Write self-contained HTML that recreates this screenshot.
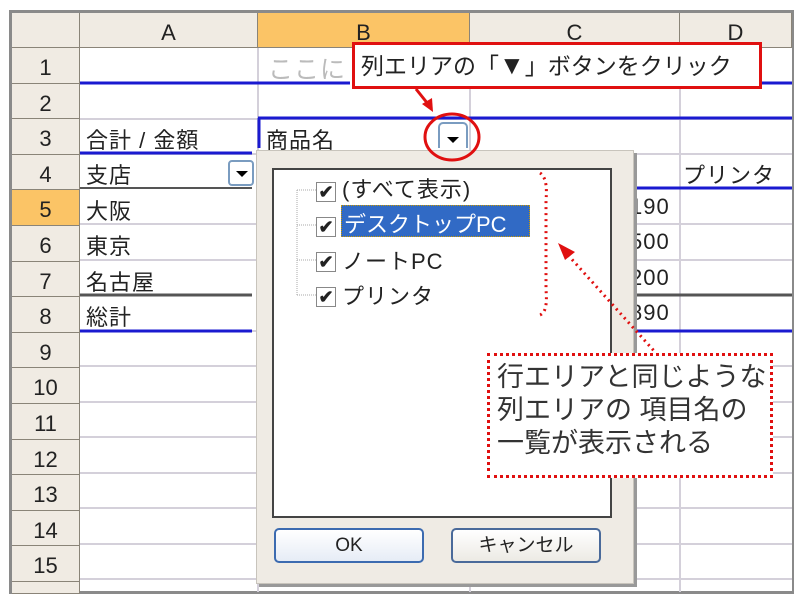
<!DOCTYPE html>
<html><head><meta charset="utf-8"><style>
*{margin:0;padding:0;box-sizing:border-box}
body{width:800px;height:600px;background:#fff;position:relative;overflow:hidden;font-family:"Liberation Sans","Noto Sans CJK JP",sans-serif;color:#222}
.a{position:absolute}
.hd{background:#f0ebe3;border-right:1px solid #8a8478;border-bottom:1px solid #8a8478;text-align:center;font-size:22px;color:#222}
.t{position:absolute;font-size:22px;white-space:nowrap;color:#222;letter-spacing:1px}
</style></head><body>
<div class="a" style="left:9px;top:10px;width:785px;height:584px;border:3px solid #8a8a8a;border-right-width:2px;background:#fff"></div>
<svg class="a" style="left:0;top:0" width="800" height="600">
 <g stroke="#d4d0da" stroke-width="2">
  <line x1="80" y1="119" x2="792" y2="119"/><line x1="80" y1="154" x2="792" y2="154"/>
  <line x1="80" y1="224" x2="792" y2="224"/><line x1="80" y1="260" x2="792" y2="260"/>
  <line x1="80" y1="366" x2="792" y2="366"/><line x1="80" y1="402" x2="792" y2="402"/>
  <line x1="80" y1="437" x2="792" y2="437"/><line x1="80" y1="473" x2="792" y2="473"/>
  <line x1="80" y1="508" x2="792" y2="508"/><line x1="80" y1="544" x2="792" y2="544"/>
  <line x1="80" y1="579" x2="792" y2="579"/><line x1="80" y1="331" x2="792" y2="331"/>
  <line x1="258" y1="48" x2="258" y2="592"/><line x1="470" y1="48" x2="470" y2="592"/>
  <line x1="680" y1="48" x2="680" y2="592"/>
 </g>
 <line x1="80" y1="83" x2="350" y2="83" stroke="#1a1ad0" stroke-width="3"/>
 <line x1="762" y1="83" x2="792" y2="83" stroke="#1a1ad0" stroke-width="3"/>
 <line x1="258" y1="118" x2="792" y2="118" stroke="#1a1ad0" stroke-width="3"/>
 <line x1="259" y1="118" x2="259" y2="148" stroke="#1a1ad0" stroke-width="3"/>
 <line x1="80" y1="153" x2="252" y2="153" stroke="#1a1ad0" stroke-width="3"/>
 <line x1="634" y1="188" x2="792" y2="188" stroke="#1a1ad0" stroke-width="3"/>
 <line x1="80" y1="295" x2="252" y2="295" stroke="#555" stroke-width="3"/>
 <line x1="634" y1="295" x2="792" y2="295" stroke="#555" stroke-width="3"/>
 <line x1="80" y1="331" x2="252" y2="331" stroke="#1a1ad0" stroke-width="3"/>
 <line x1="634" y1="331" x2="792" y2="331" stroke="#1a1ad0" stroke-width="3"/>
 <line x1="80" y1="188" x2="252" y2="188" stroke="#555" stroke-width="2"/>
</svg>
<div class="a hd" style="left:12px;top:13px;width:68px;height:35px"></div>
<div class="a hd" style="left:80px;top:13px;width:178px;height:35px;line-height:40px">A</div>
<div class="a hd" style="left:258px;top:13px;width:212px;height:35px;line-height:40px;background:#fbc466">B</div>
<div class="a hd" style="left:470px;top:13px;width:210px;height:35px;line-height:40px">C</div>
<div class="a hd" style="left:680px;top:13px;width:112px;height:35px;line-height:40px">D</div>
<div class="a hd" style="left:12px;top:48px;width:68px;height:35.6px;line-height:40px">1</div>
<div class="a hd" style="left:12px;top:83.6px;width:68px;height:35.6px;line-height:40px">2</div>
<div class="a hd" style="left:12px;top:119.2px;width:68px;height:35.6px;line-height:40px">3</div>
<div class="a hd" style="left:12px;top:154.8px;width:68px;height:35.6px;line-height:40px">4</div>
<div class="a hd" style="left:12px;top:190.4px;width:68px;height:35.6px;line-height:40px;background:#fbc466">5</div>
<div class="a hd" style="left:12px;top:226px;width:68px;height:35.6px;line-height:40px">6</div>
<div class="a hd" style="left:12px;top:261.6px;width:68px;height:35.6px;line-height:40px">7</div>
<div class="a hd" style="left:12px;top:297.2px;width:68px;height:35.6px;line-height:40px">8</div>
<div class="a hd" style="left:12px;top:332.8px;width:68px;height:35.6px;line-height:40px">9</div>
<div class="a hd" style="left:12px;top:368.4px;width:68px;height:35.6px;line-height:40px">10</div>
<div class="a hd" style="left:12px;top:404px;width:68px;height:35.6px;line-height:40px">11</div>
<div class="a hd" style="left:12px;top:439.6px;width:68px;height:35.6px;line-height:40px">12</div>
<div class="a hd" style="left:12px;top:475.2px;width:68px;height:35.6px;line-height:40px">13</div>
<div class="a hd" style="left:12px;top:510.8px;width:68px;height:35.6px;line-height:40px">14</div>
<div class="a hd" style="left:12px;top:546.4px;width:68px;height:35.6px;line-height:40px">15</div>
<div class="a hd" style="left:12px;top:582px;width:68px;height:12px"></div>
<div class="t" style="left:268px;top:50px;color:#bbb;font-size:25px">ここに</div>
<div class="t" style="left:86px;top:123px">合計 / 金額</div>
<div class="t" style="left:266px;top:123px">商品名</div>
<div class="t" style="left:86px;top:158px">支店</div>
<div class="t" style="left:86px;top:194px">大阪</div>
<div class="t" style="left:86px;top:229px">東京</div>
<div class="t" style="left:86px;top:265px">名古屋</div>
<div class="t" style="left:86px;top:300px">総計</div>
<div class="t" style="left:683px;top:158px">プリンタ</div>
<div class="t" style="left:630px;top:194px">190</div>
<div class="t" style="left:630px;top:229px">500</div>
<div class="t" style="left:630px;top:265px">200</div>
<div class="t" style="left:630px;top:300px">890</div>
<div class="a" style="left:228px;top:160px;width:26px;height:26px;border:2px solid #7a9cc0;border-radius:4px;background:#fff"><div class="a" style="left:6px;top:9px;border-left:6px solid transparent;border-right:6px solid transparent;border-top:6px solid #000"></div></div>
<div class="a" style="left:438px;top:122px;width:30px;height:26px;border:2px solid #7a9cc0;border-bottom:none;border-radius:5px 5px 0 0;background:#fff"><div class="a" style="left:7px;top:13px;border-left:6px solid transparent;border-right:6px solid transparent;border-top:6px solid #000"></div></div>
<div class="a" style="left:256px;top:150px;width:378px;height:434px;background:#efebe4;border:1px solid #c8c4bc;box-shadow:3px 3px 0 #999"></div>
<div class="a" style="left:272px;top:168px;width:340px;height:350px;background:#fff;border:2px solid #444"></div>
<svg class="a" style="left:280px;top:175px" width="60" height="130"><g stroke="#aaa" stroke-dasharray="1 1"><line x1="17" y1="15" x2="17" y2="120"/><line x1="17" y1="15" x2="40" y2="15"/><line x1="17" y1="50" x2="40" y2="50"/><line x1="17" y1="85" x2="40" y2="85"/><line x1="17" y1="120" x2="40" y2="120"/></g></svg>
<div class="a" style="left:316px;top:178px">
 <div style="position:absolute;left:0;top:4px;width:20px;height:20px;border:1px solid #888;background:#fff;font-size:18px;line-height:18px;text-align:center;font-weight:bold">✔</div>
 <div style="position:absolute;left:0;top:39px;width:20px;height:20px;border:1px solid #888;background:#fff;font-size:18px;line-height:18px;text-align:center;font-weight:bold">✔</div>
 <div style="position:absolute;left:0;top:74px;width:20px;height:20px;border:1px solid #888;background:#fff;font-size:18px;line-height:18px;text-align:center;font-weight:bold">✔</div>
 <div style="position:absolute;left:0;top:109px;width:20px;height:20px;border:1px solid #888;background:#fff;font-size:18px;line-height:18px;text-align:center;font-weight:bold">✔</div>
</div>
<div class="t" style="left:342px;top:172px">(すべて表示)</div>
<div class="a" style="left:341px;top:205px;width:189px;height:32px;background:#316ac5;border:1px dotted #c90"></div>
<div class="t" style="left:344px;top:207px;color:#fff;letter-spacing:0">デスクトップPC</div>
<div class="t" style="left:342px;top:244px">ノートPC</div>
<div class="t" style="left:342px;top:279px">プリンタ</div>
<div class="a" style="left:274px;top:528px;width:150px;height:35px;border:2px solid #3c6bb0;border-radius:5px;background:linear-gradient(#fff,#e6ecf6);text-align:center;font-size:19px;line-height:31px">OK</div>
<div class="a" style="left:451px;top:528px;width:150px;height:35px;border:2px solid #4a6a9a;border-radius:5px;background:linear-gradient(#fff,#eceae4);text-align:center;font-size:19px;line-height:31px">キャンセル</div>
<div class="a" style="left:352px;top:42px;width:410px;height:47px;border:3px solid #e01010;background:#fff;font-size:23px;line-height:40px;padding-left:6px;white-space:nowrap">列エリアの「<span style="font-size:26px">▼</span>」ボタンをクリック</div>
<div class="a" style="left:487px;top:353px;width:286px;height:125px;border:3px dotted #e01010;background:#fff;font-size:27px;line-height:33px;padding:5px 0 0 7px;white-space:nowrap;color:#333">行エリアと同じような<br>列エリアの 項目名の<br>一覧が表示される</div>
<svg class="a" style="left:0;top:0" width="800" height="600">
 <line x1="416" y1="89" x2="428" y2="104" stroke="#e01010" stroke-width="3"/>
 <polygon points="433,112 422,104 432,98" fill="#e01010"/>
 <ellipse cx="452" cy="137" rx="27" ry="23" fill="none" stroke="#e01010" stroke-width="3"/>
 <path d="M540 173 Q548 178 546 200 L546 290 Q548 312 540 315" fill="none" stroke="#e01010" stroke-width="3" stroke-dasharray="2 4"/>
 <line x1="568" y1="255" x2="655" y2="352" stroke="#e01010" stroke-width="3" stroke-dasharray="2 4"/>
 <polygon points="558,243 575,252 565,260" fill="#e01010"/>
</svg>
</body></html>
